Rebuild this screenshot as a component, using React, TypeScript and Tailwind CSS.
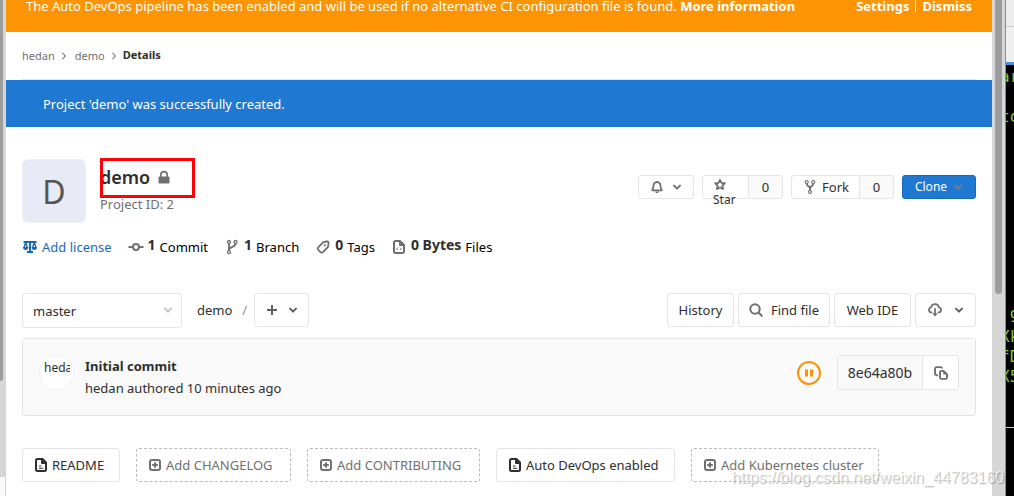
import React from 'react';

type IconProps = { className?: string };

const ChevronDown = ({ className = '' }: IconProps) => (
    <svg viewBox="0 0 10 10" className={`w-[10px] h-[10px] shrink-0 ${className}`} fill="none" stroke="currentColor" strokeWidth="2" strokeLinecap="round" strokeLinejoin="round">
        <path d="M2 3.600 5 6.600l3-3" />
    </svg>
);

const ChevronRight = () => (
    <svg viewBox="0 0 6 8" className="w-1.5 h-2 shrink-0 text-[#8a8a8a]" fill="none" stroke="currentColor" strokeWidth="1.200" strokeLinecap="round">
        <path d="M1.700 1.200 4.300 4 1.700 6.800" />
    </svg>
);

const LockIcon = () => (
    <svg viewBox="0 0 12 14" className="w-3 h-3.5 shrink-0 text-[#707070]" fill="currentColor">
        <path d="M1.200 6.500H2V4.800a4 4 0 0 1 8 0v1.700h.8c.4 0 .7.300.7.700v5.600c0 .4-.3.700-.7.700H1.200c-.4 0-.7-.3-.7-.7V7.200c0-.4.300-.7.700-.7zM3.600 6.500h4.800V4.800a2.400 2.400 0 0 0-4.800 0v1.700z" />
    </svg>
);

const ScaleIcon = () => (
    <svg viewBox="0 0 16 16" className="w-4 h-4 shrink-0" fill="none" stroke="currentColor" strokeWidth="2">
        <path d="M1.500 3h13M8 2.500v10.500M5 13h6" />
        <path d="M3.700 3.500 2 8.500M3.700 3.500l1.700 5M12.300 3.500l-1.700 5M12.300 3.500l1.700 5" strokeWidth="1.400" />
        <path d="M1 8h5.400a2.700 2.900 0 0 1-5.400 0zM9.600 8H15a2.700 2.900 0 0 1-5.400 0z" fill="currentColor" stroke="none" />
    </svg>
);

const CommitIcon = () => (
    <svg viewBox="0 0 16 16" className="w-4 h-4 shrink-0" fill="none" stroke="currentColor" strokeWidth="2" strokeLinecap="round">
        <circle cx="8" cy="8" r="3" />
        <path d="M1.200 8H4M12 8h2.800" />
    </svg>
);

const BranchIcon = () => (
    <svg viewBox="0 0 16 16" className="w-4 h-4 shrink-0" fill="none" stroke="currentColor" strokeWidth="1.300">
        <circle cx="5" cy="3" r="1.500" />
        <circle cx="11.500" cy="3" r="1.500" />
        <circle cx="5" cy="13.200" r="1.500" />
        <path d="M5 4.500v7.200M11.500 4.500c0 3.800-5.400 3-6.400 6" strokeWidth="1.900" />
    </svg>
);

const TagIcon = () => (
    <svg viewBox="0 0 16 16" className="w-4 h-4 shrink-0" fill="none" stroke="currentColor" strokeWidth="1.800" strokeLinejoin="round">
        <path d="M8.800 3.200 12 2.500c1-.2 1.700.5 1.600 1.500l-.5 3.300c-.1.500-.3.900-.6 1.200l-4.600 4.600c-.7.700-1.700.7-2.400 0l-2.300-2.300c-.7-.7-.7-1.700 0-2.400l4.400-4.600c.3-.3.700-.5 1.200-.6z" />
        <circle cx="9.800" cy="6.300" r="1.100" fill="currentColor" stroke="none" />
    </svg>
);

const CodeFileIcon = () => (
    <svg viewBox="0 0 16 16" className="w-4 h-4 shrink-0" fill="none" stroke="currentColor" strokeWidth="2" strokeLinejoin="round">
        <path d="M9 2H4.500A1.500 1.500 0 0 0 3 3.500v9A1.500 1.500 0 0 0 4.500 14h7a1.500 1.500 0 0 0 1.500-1.500V6z" />
        <path d="M8.500 2v4.500H13z" fill="currentColor" strokeWidth="1" />
        <path d="m6.800 8.700-1.200 1.200 1.200 1.200M9.200 8.700l1.200 1.200-1.200 1.200" strokeWidth="1" />
    </svg>
);

const BellIcon = () => (
    <svg viewBox="0 0 14 14" className="w-3.5 h-3.5 shrink-0 text-[#707070]" fill="none" stroke="currentColor" strokeWidth="1.800" strokeLinejoin="round">
        <path d="M7 2.200c2.300 0 3.400 1.700 3.500 3.800.1 2 .4 2.800 1.300 4.300H2.200C3.100 8.800 3.400 8 3.500 6 3.600 3.900 4.700 2.200 7 2.200z" />
        <path d="M5 11.500h4L8 13H6z" fill="currentColor" stroke="none" />
        <path d="M6.200 1h1.600v1H6.200z" fill="currentColor" stroke="none" />
    </svg>
);

const StarIcon = () => (
    <svg viewBox="0 0 14 14" className="w-3.5 h-3.5 shrink-0 text-[#707070]" fill="none" stroke="currentColor" strokeWidth="1.900" strokeLinejoin="round">
        <path d="m7 2 1.400 2.900 3.300.4-2.300 2.300.6 3.400-3-1.500-3 1.500.6-3.400-2.300-2.300 3.300-.4z" />
    </svg>
);

const ForkIcon = () => (
    <svg viewBox="0 0 16 16" className="w-4 h-4 shrink-0 text-[#707070]" fill="none" stroke="currentColor" strokeWidth="1.200">
        <circle cx="4.700" cy="3" r="1.500" />
        <circle cx="11.300" cy="3" r="1.500" />
        <circle cx="8" cy="13" r="1.500" />
        <path d="M4.700 4.500C4.700 7.500 8 7 8 9.500v2M11.300 4.500C11.300 7.500 8 7 8 9.500" strokeWidth="1.900" />
    </svg>
);

const SearchIcon = () => (
    <svg viewBox="0 0 14 14" className="w-3.5 h-3.5 shrink-0 text-[#707070]" fill="none" stroke="currentColor" strokeWidth="2" strokeLinecap="round">
        <circle cx="6" cy="6" r="4.700" />
        <path d="m9.800 9.800 2.900 2.900" />
    </svg>
);

const CloudDownloadIcon = () => (
    <svg viewBox="0 0 14 14" className="w-3.5 h-3.5 shrink-0 text-[#707070]" fill="none" stroke="currentColor" strokeWidth="1.800" strokeLinecap="round" strokeLinejoin="round">
        <path d="M3.600 9.400C2 9.300 1 8.300 1 6.900c0-1.300.8-2.200 2.100-2.500C3.500 2.400 5 1.200 7 1.200c2 0 3.500 1.200 3.900 3.200 1.300.3 2.100 1.200 2.100 2.500 0 1.400-1 2.400-2.600 2.500M7 6v6" />
        <path d="M4.300 10.300h5.400L7 13.500z" fill="currentColor" stroke="none" />
    </svg>
);

const CopyIcon = () => (
    <svg viewBox="0 0 14 14" className="w-3.5 h-3.5 shrink-0 text-[#707070]" fill="none" stroke="currentColor" strokeWidth="1.900" strokeLinejoin="round">
        <path d="M4 9.300H2.800A1.800 1.800 0 0 1 1 7.500V2.900c0-1 .8-1.800 1.800-1.800h3.500C7.400 1.100 8 1.700 8 2.600" />
        <path d="M9.500 4.900H7.500c-.9 0-1.500.6-1.500 1.500v5c0 .9.600 1.500 1.500 1.500h4c.9 0 1.500-.6 1.500-1.500V8.200z" />
        <path d="M9.200 5v3.500H13z" fill="currentColor" stroke="none" />
    </svg>
);

const DocIcon = () => (
    <svg viewBox="0 0 14 14" className="w-3.5 h-3.5 shrink-0 text-[#2e2e2e]" fill="none" stroke="currentColor" strokeWidth="2" strokeLinejoin="round">
        <path d="M8.500 1h-5A1.500 1.500 0 0 0 2 2.500v9A1.500 1.500 0 0 0 3.500 13h7a1.500 1.500 0 0 0 1.500-1.500v-7z" />
        <path d="M7.500 1v4.500H12z" fill="currentColor" strokeWidth="1" />
        <path d="M5 8h2.500M5 10.300h4.200" strokeWidth="1.100" />
    </svg>
);

const AddIcon = () => (
    <svg viewBox="0 0 14 14" className="w-3.5 h-3.5 shrink-0" fill="none" stroke="currentColor" strokeWidth="2">
        <rect x="2" y="2" width="10" height="10" rx="2" />
        <path d="M7 4.200v5.600M4.200 7h5.600" strokeWidth="1.900" />
    </svg>
);

const outline = 'bg-white border border-[#e5e5e5] rounded-[3px] text-[#2e2e2e]';

const stats = [
    { icon: <CommitIcon />, value: '1', label: 'Commit' },
    { icon: <BranchIcon />, value: '1', label: 'Branch' },
    { icon: <TagIcon />, value: '0', label: 'Tags' },
    { icon: <CodeFileIcon />, value: '0 Bytes', label: 'Files' }
];

const files = [
    { label: 'README', exists: true, width: 'w-[98px]' },
    { label: 'Add CHANGELOG', exists: false, width: 'w-[155px]' },
    { label: 'Add CONTRIBUTING', exists: false, width: 'w-[173px]' },
    { label: 'Auto DevOps enabled', exists: true, width: 'w-[179px]' },
    { label: 'Add Kubernetes cluster', exists: false, width: 'w-[188px]' }
];

const terminalLines = ['ar', '', 'to', '', '', '', '', '', '', '', '', '', ':9', 'Xk', 'fD', 'X5'];

const Terminal: React.FC = () => (
    <div className="w-[9px] shrink-0 flex flex-col overflow-hidden bg-black border-l border-[#8c8c8c]">
        <div className="h-[27px] shrink-0 bg-[#ededed] border-b border-[#cfcfcf]" />
        <div className="h-[35px] shrink-0 bg-[#efefef]" />
        <div className="h-[3px] shrink-0 bg-[#4a90d9]" />
        <pre className="-ml-1.5 pt-0.5 h-[362px] shrink-0 text-[16px] leading-5 text-[#7ccc2c] font-['DejaVu_Sans_Mono',monospace]">
            {terminalLines.join('\n')}
        </pre>
        <div className="h-px shrink-0 bg-[#d0d0d0]" />
    </div>
);

const App: React.FC = () => {
    return (
        <div className="relative flex h-screen overflow-hidden bg-white text-[13px] leading-5 text-[#2e2e2e] font-['Noto_Sans',sans-serif]">
            {/* Left window edge */}
            <div className="w-1.5 shrink-0 flex flex-col bg-[#d6d6d6]">
                <div className="w-[3px] h-[381px] bg-[#9b9c9e] rounded-br-[3px]" />
                <div className="h-24 shrink-0" />
                <div className="grow bg-[#fafafa] border-r border-[#d0d0d0]" />
            </div>

            <main className="flex-1 min-w-0 overflow-hidden">
                {/* Auto DevOps banner */}
                <div className="h-8 px-5 flex items-start justify-between bg-[#fc9403] text-white whitespace-nowrap">
                    <p className="-mt-1">
                        The Auto DevOps pipeline has been enabled and will be used if no alternative CI configuration file is found.{' '}
                        <a href="#info" className="font-bold">More information</a>
                    </p>
                    <div className="-mt-1 flex items-center gap-1.5 font-bold">
                        <a href="#settings">Settings</a>
                        <span className="w-px h-3 bg-white" />
                        <a href="#dismiss">Dismiss</a>
                    </div>
                </div>

                <nav className="mx-4 h-12 flex items-center gap-1.5 border-b border-[#e5e5e5] text-[11px] text-[#707070]">
                    <a href="#hedan">hedan</a>
                    <ChevronRight />
                    <a href="#demo" className="ml-0.5">demo</a>
                    <ChevronRight />
                    <a href="#details" className="pb-0.5 font-bold text-[#2e2e2e]">Details</a>
                </nav>

                <div className="h-[47px] pl-[37px] flex items-center bg-[#1f78d1] text-white">
                    Project 'demo' was successfully created.
                </div>

                <div className="px-4 pt-8">
                    {/* Project header */}
                    <div className="flex items-start">
                        <div className="w-16 h-16 shrink-0 pt-0.5 flex items-center justify-center rounded-md bg-[#e8eaf6] border border-[#f0f0f4] text-[32px] text-[#555]">
                            D
                        </div>
                        <div className="ml-3.5 pt-1">
                            <div className="relative flex items-center gap-2">
                                <h1 className="text-lg leading-7 font-semibold">demo</h1>
                                <LockIcon />
                                <span className="absolute left-0 -top-[5px] w-[95px] h-10 border-3 border-[#fb0007]" />
                            </div>
                            <p className="leading-[26px] text-[#707070]">Project ID: 2</p>
                        </div>

                        <div className="ml-auto mt-4 flex gap-2">
                            <button aria-label="Notifications" className={`w-14 h-6 flex items-center justify-center gap-2 ${outline}`}>
                                <BellIcon />
                                <ChevronDown className="text-[#707070]" />
                            </button>
                            <div className="flex h-6">
                                <button className={`w-[47px] pl-2.5 pt-0.5 flex flex-col items-start rounded-r-none text-xs leading-4 ${outline}`}>
                                    <StarIcon />
                                    <span>Star</span>
                                </button>
                                <a href="#stars" className="w-[35px] -ml-px flex items-center justify-center bg-[#fafafa] border border-[#e5e5e5] rounded-r-[3px]">0</a>
                            </div>
                            <div className="flex h-6">
                                <button className={`w-[69px] flex items-center justify-center gap-1 ${outline}`}>
                                    <ForkIcon />
                                    Fork
                                </button>
                                <a href="#forks" className="w-[35px] -ml-px flex items-center justify-center bg-[#fafafa] border border-[#e5e5e5] rounded-r-[3px]">0</a>
                            </div>
                            <button className="w-[74px] h-6 flex items-center justify-center gap-1.5 rounded-[3px] bg-[#1f78d1] border border-[#1b69b6] text-xs text-white">
                                Clone
                                <ChevronDown className="text-[#7d7d7d]" />
                            </button>
                        </div>
                    </div>

                    {/* Stats */}
                    <div className="mt-3.5 flex items-center gap-4 text-black">
                        <a href="#license" className="flex items-center gap-1 text-[#1b69b6]">
                            <ScaleIcon />
                            Add license
                        </a>
                        {stats.map(stat => (
                            <a key={stat.label} href={`#${stat.label}`} className="flex items-center gap-1">
                                <span className="text-[#707070]">{stat.icon}</span>
                                <strong className="pb-1 text-sm leading-4 font-bold text-[#2e2e2e]">{stat.value}</strong>
                                {stat.label}
                            </a>
                        ))}
                    </div>

                    {/* Tree controls */}
                    <div className="mt-9 flex items-start leading-[34px]">
                        <div className="relative w-40">
                            <select aria-label="Branch" className={`w-full h-[35px] pl-2.5 appearance-none ${outline}`}>
                                <option>master</option>
                            </select>
                            <ChevronDown className="absolute right-[9px] top-3 pointer-events-none text-[#c4c4c4]" />
                        </div>
                        <a href="#tree" className="ml-[15px]">demo</a>
                        <span className="ml-2.5 mr-[7px] text-[#919191]">/</span>
                        <button aria-label="Add to tree" className={`w-[55px] h-[34px] flex items-center justify-center gap-2.5 ${outline}`}>
                            <svg viewBox="0 0 12 12" className="w-3 h-3 text-[#606060]" fill="none" stroke="currentColor" strokeWidth="2">
                                <path d="M6 1v10M1 6h10" />
                            </svg>
                            <ChevronDown className="text-[#606060]" />
                        </button>
                        <div className="ml-auto flex gap-1 leading-5">
                            <button className={`w-[67px] h-[34px] ${outline}`}>History</button>
                            <button className={`w-[92px] h-[34px] flex items-center justify-center gap-2 ${outline}`}>
                                <SearchIcon />
                                Find file
                            </button>
                            <button className={`w-[77px] h-[34px] ${outline}`}>Web IDE</button>
                            <button aria-label="Download" className={`w-[61px] h-[34px] flex items-center justify-center gap-3 ${outline}`}>
                                <CloudDownloadIcon />
                                <ChevronDown className="text-[#606060]" />
                            </button>
                        </div>
                    </div>

                    {/* Last commit */}
                    <div className="mt-2.5 p-4 flex items-start bg-[#fafafa] border border-[#e5e5e5] rounded-[3px]">
                        <div className="w-[35px] h-[35px] shrink-0 pt-1 pl-1 pr-0.5 rounded-full bg-white border border-[#f2f2f2]">
                            <div className="w-[26px] h-6 overflow-hidden text-xs">hedan</div>
                        </div>
                        <div className="ml-[11px] leading-[22px]">
                            <a href="#commit" className="block font-bold">Initial commit</a>
                            <p>hedan authored 10 minutes ago</p>
                        </div>
                        <div className="ml-auto flex items-center gap-4">
                            <svg viewBox="0 0 24 24" className="w-6 h-6" fill="none" stroke="#fc9403">
                                <circle cx="12" cy="12" r="11" strokeWidth="2" />
                                <path d="M9.500 8.500v7M14.500 8.500v7" strokeWidth="3" />
                            </svg>
                            <div className="flex h-[35px] bg-white border border-[#e5e5e5] rounded-[3px]">
                                <span className="w-[85px] flex items-center justify-center bg-[#fafafa] border-r border-[#e5e5e5] text-sm">8e64a80b</span>
                                <button aria-label="Copy commit SHA" className="w-[35px] flex items-center justify-center">
                                    <CopyIcon />
                                </button>
                            </div>
                        </div>
                    </div>

                    {/* Quick file links */}
                    <div className="mt-8 flex gap-4 whitespace-nowrap">
                        {files.map(file => (
                            <a
                                key={file.label}
                                href="#file"
                                className={`h-[34px] pl-[11px] flex items-center gap-1 rounded-[3px] border ${file.width} ${file.exists ? 'border-[#e5e5e5] text-[#2e2e2e]' : 'border-dashed border-[#bababa] text-[#707070]'}`}
                            >
                                {file.exists ? <DocIcon /> : <AddIcon />}
                                {file.label}
                            </a>
                        ))}
                    </div>
                </div>
            </main>

            {/* Page scrollbar */}
            <div className="w-[13px] shrink-0 px-[3px] bg-[#d6d6d6]">
                <div className="w-[7px] h-[294px] rounded-b-full bg-[#9b9c9e]" />
            </div>

            <Terminal />

            <span className="absolute right-2.5 bottom-2 text-[16px] text-white/70 [text-shadow:1px_1px_1px_rgb(0_0_0/0.3)] font-['Liberation_Sans',sans-serif]">
                https://blog.csdn.net/weixin_44783160
            </span>
        </div>
    );
};

export default App;
